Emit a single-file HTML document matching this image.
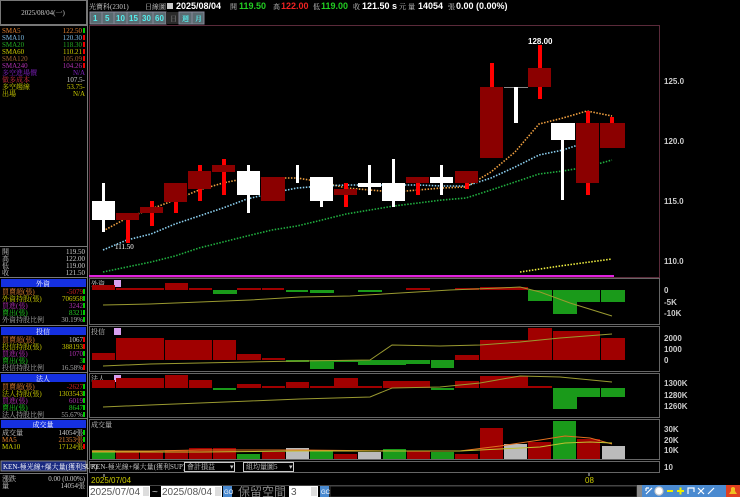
<!DOCTYPE html>
<html><head><meta charset="utf-8"><style>
html,body{margin:0;padding:0;background:#000;width:740px;height:497px;overflow:hidden}
svg{display:block}
text{font-family:"Liberation Sans","Noto Sans CJK TC",sans-serif}
.s{font-family:"Liberation Serif","Noto Serif CJK SC",serif;font-size:7px}
</style></head><body>
<svg width="740" height="497" viewBox="0 0 740 497" xmlns="http://www.w3.org/2000/svg">
<rect width="740" height="497" fill="#000"/>
<!-- left panel frames -->
<rect x="0.5" y="0.5" width="86" height="24" fill="none" stroke="#777"/>
<text x="43" y="15" class="s" fill="#ccc" text-anchor="middle">2025/08/04(一)</text>
<line x1="87.5" y1="0" x2="87.5" y2="497" stroke="#777"/>
<line x1="0" y1="25.5" x2="87" y2="25.5" stroke="#777"/>
<g class="s">
<text x="2" y="33" fill="#e08030" class="s">SMA5</text><text x="82" y="33" fill="#e08030" class="s" text-anchor="end">122.50</text><rect x="83" y="28" width="2" height="5" fill="#0c0"/>
<text x="2" y="40" fill="#7ab8e0" class="s">SMA10</text><text x="82" y="40" fill="#7ab8e0" class="s" text-anchor="end">120.30</text><rect x="83" y="35" width="2" height="5" fill="#e00"/>
<text x="2" y="47" fill="#2a2" class="s">SMA20</text><text x="82" y="47" fill="#2a2" class="s" text-anchor="end">118.30</text><rect x="83" y="42" width="2" height="5" fill="#e00"/>
<text x="2" y="54" fill="#cc0" class="s">SMA60</text><text x="82" y="54" fill="#cc0" class="s" text-anchor="end">110.21</text><rect x="83" y="49" width="2" height="5" fill="#e00"/>
<text x="2" y="61" fill="#a06030" class="s">SMA120</text><text x="82" y="61" fill="#a06030" class="s" text-anchor="end">105.09</text><rect x="83" y="56" width="2" height="5" fill="#e00"/>
<text x="2" y="68" fill="#b030b0" class="s">SMA240</text><text x="82" y="68" fill="#b030b0" class="s" text-anchor="end">104.26</text><rect x="83" y="63" width="2" height="5" fill="#e00"/>
<text x="2" y="75" fill="#8020c0" class="s">多空進場價</text><text x="85" y="75" fill="#8020c0" class="s" text-anchor="end">N/A</text>
<text x="2" y="82" fill="#d03040" class="s">做多成本</text><text x="85" y="82" fill="#ccc" class="s" text-anchor="end">107.5-</text>
<text x="2" y="89" fill="#cc0" class="s">多空趨線</text><text x="85" y="89" fill="#cc0" class="s" text-anchor="end">53.75-</text>
<text x="2" y="96" fill="#cc0" class="s">出場</text><text x="85" y="96" fill="#cc0" class="s" text-anchor="end">N/A</text>
</g>
<line x1="0" y1="246.5" x2="87" y2="246.5" stroke="#777"/>
<g>
<text x="2" y="254" fill="#ccc" class="s">開</text><text x="85" y="254" fill="#ccc" class="s" text-anchor="end">119.50</text>
<text x="2" y="261" fill="#ccc" class="s">高</text><text x="85" y="261" fill="#ccc" class="s" text-anchor="end">122.00</text>
<text x="2" y="268" fill="#ccc" class="s">低</text><text x="85" y="268" fill="#ccc" class="s" text-anchor="end">119.00</text>
<text x="2" y="275" fill="#ccc" class="s">收</text><text x="85" y="275" fill="#ccc" class="s" text-anchor="end">121.50</text>
</g>
<!-- left section headers -->
<g>
<line x1="0" y1="277.5" x2="87" y2="277.5" stroke="#777"/>
<rect x="1" y="279" width="85" height="8" fill="#1530e0"/><text x="43" y="286" fill="#fff" class="s" text-anchor="middle">外資</text>
<text x="2" y="294" fill="#e08030" class="s">買賣超(張)</text><text x="83" y="294" fill="#d02020" class="s" text-anchor="end">-5079</text><rect x="83" y="289" width="2" height="5" fill="#0c0"/>
<text x="2" y="301" fill="#cc0" class="s">外資持股(張)</text><text x="83" y="301" fill="#cc0" class="s" text-anchor="end">706958</text><rect x="83" y="296" width="2" height="5" fill="#0c0"/>
<text x="2" y="308" fill="#b030b0" class="s">買進(張)</text><text x="83" y="308" fill="#b030b0" class="s" text-anchor="end">3242</text><rect x="83" y="303" width="2" height="5" fill="#0c0"/>
<text x="2" y="315" fill="#2c2" class="s">賣出(張)</text><text x="83" y="315" fill="#2c2" class="s" text-anchor="end">8321</text><rect x="83" y="310" width="2" height="5" fill="#0c0"/>
<text x="2" y="322" fill="#aaa" class="s">外資持股比例</text><text x="83" y="322" fill="#aaa" class="s" text-anchor="end">30.19%</text><rect x="83" y="317" width="2" height="5" fill="#0c0"/>
<line x1="0" y1="325.5" x2="87" y2="325.5" stroke="#777"/>
<rect x="1" y="327" width="85" height="8" fill="#1530e0"/><text x="43" y="334" fill="#fff" class="s" text-anchor="middle">投信</text>
<text x="2" y="342" fill="#e08030" class="s">買賣超(張)</text><text x="83" y="342" fill="#ccc" class="s" text-anchor="end">1067</text><rect x="83" y="337" width="2" height="5" fill="#e00"/>
<text x="2" y="349" fill="#cc0" class="s">投信持股(張)</text><text x="83" y="349" fill="#cc0" class="s" text-anchor="end">388193</text><rect x="83" y="344" width="2" height="5" fill="#e00"/>
<text x="2" y="356" fill="#b030b0" class="s">買進(張)</text><text x="83" y="356" fill="#b030b0" class="s" text-anchor="end">1070</text><rect x="83" y="351" width="2" height="5" fill="#0c0"/>
<text x="2" y="363" fill="#2c2" class="s">賣出(張)</text><text x="83" y="363" fill="#2c2" class="s" text-anchor="end">3</text><rect x="83" y="358" width="2" height="5" fill="#0c0"/>
<text x="2" y="370" fill="#aaa" class="s">投信持股比例</text><text x="83" y="370" fill="#aaa" class="s" text-anchor="end">16.58%</text><rect x="83" y="365" width="2" height="5" fill="#e00"/>
<line x1="0" y1="372.5" x2="87" y2="372.5" stroke="#777"/>
<rect x="1" y="374" width="85" height="8" fill="#1530e0"/><text x="43" y="381" fill="#fff" class="s" text-anchor="middle">法人</text>
<text x="2" y="389" fill="#e08030" class="s">買賣超(張)</text><text x="83" y="389" fill="#d02020" class="s" text-anchor="end">-2627</text><rect x="83" y="384" width="2" height="5" fill="#0c0"/>
<text x="2" y="396" fill="#cc0" class="s">法人持股(張)</text><text x="83" y="396" fill="#cc0" class="s" text-anchor="end">1303543</text><rect x="83" y="391" width="2" height="5" fill="#0c0"/>
<text x="2" y="403" fill="#b030b0" class="s">買進(張)</text><text x="83" y="403" fill="#b030b0" class="s" text-anchor="end">6019</text><rect x="83" y="398" width="2" height="5" fill="#0c0"/>
<text x="2" y="410" fill="#2c2" class="s">賣出(張)</text><text x="83" y="410" fill="#2c2" class="s" text-anchor="end">8647</text><rect x="83" y="405" width="2" height="5" fill="#0c0"/>
<text x="2" y="417" fill="#aaa" class="s">法人持股比例</text><text x="83" y="417" fill="#aaa" class="s" text-anchor="end">55.67%</text><rect x="83" y="412" width="2" height="5" fill="#0c0"/>
<line x1="0" y1="418.5" x2="87" y2="418.5" stroke="#777"/>
<rect x="1" y="420" width="85" height="8" fill="#1530e0"/><text x="43" y="427" fill="#fff" class="s" text-anchor="middle">成交量</text>
<text x="2" y="435" fill="#ccc" class="s">成交量</text><text x="83" y="435" fill="#ccc" class="s" text-anchor="end">14054張</text><rect x="83" y="430" width="2" height="5" fill="#0c0"/>
<text x="2" y="442" fill="#e08030" class="s">MA5</text><text x="83" y="442" fill="#e08030" class="s" text-anchor="end">21353張</text><rect x="83" y="437" width="2" height="5" fill="#0c0"/>
<text x="2" y="449" fill="#cc0" class="s">MA10</text><text x="83" y="449" fill="#cc0" class="s" text-anchor="end">17124張</text><rect x="83" y="444" width="2" height="5" fill="#e00"/>
<rect x="1" y="461" width="85" height="10" fill="#1a2a80" stroke="#888"/><text x="3" y="469" fill="#fff" class="s">KEN-極光線+爆大量(獲利SUP)</text>
<line x1="0" y1="473.5" x2="87" y2="473.5" stroke="#777"/>
<text x="2" y="481" fill="#ccc" class="s">漲跌</text><text x="85" y="481" fill="#ccc" class="s" text-anchor="end">0.00 (0.00%)</text>
<text x="2" y="488" fill="#ccc" class="s">量</text><text x="85" y="488" fill="#ccc" class="s" text-anchor="end">14054張</text>
</g>
<!-- top header -->
<text x="89" y="9" fill="#ccc" class="s">光寶科(2301)</text>
<text x="145" y="9" fill="#ccc" class="s">日線圖</text>
<rect x="167" y="3" width="6" height="6" fill="#ccc"/>
<text x="176" y="9" fill="#fff" font-size="9" font-weight="bold">2025/08/04</text>
<text x="230" y="9" fill="#ccc" class="s">開</text><text x="239" y="9" fill="#2c2" font-size="9" font-weight="bold">119.50</text>
<text x="273" y="9" fill="#ccc" class="s">高</text><text x="281" y="9" fill="#e22" font-size="9" font-weight="bold">122.00</text>
<text x="313" y="9" fill="#ccc" class="s">低</text><text x="321" y="9" fill="#2c2" font-size="9" font-weight="bold">119.00</text>
<text x="353" y="9" fill="#ccc" class="s">收</text><text x="362" y="9" fill="#fff" font-size="9" font-weight="bold">121.50 s</text>
<text x="399" y="9" fill="#ccc" class="s">元</text><text x="408" y="9" fill="#ccc" class="s">量</text>
<text x="418" y="9" fill="#fff" font-size="9" font-weight="bold">14054</text><text x="448" y="9" fill="#ccc" class="s">張</text>
<text x="456" y="9" fill="#fff" font-size="9" font-weight="bold">0.00 (0.00%)</text>
<g font-size="8" font-weight="bold" fill="#5ee">
<rect x="90" y="12" width="114" height="12" fill="#556"/>
<rect x="90" y="12" width="12" height="12" fill="#5a6a70" stroke="#889"/><text x="93" y="21">1</text>
<rect x="102" y="12" width="12" height="12" fill="#5a6a70" stroke="#889"/><text x="105" y="21">5</text>
<rect x="114" y="12" width="13" height="12" fill="#5a6a70" stroke="#889"/><text x="116" y="21">10</text>
<rect x="127" y="12" width="13" height="12" fill="#5a6a70" stroke="#889"/><text x="129" y="21">15</text>
<rect x="140" y="12" width="13" height="12" fill="#5a6a70" stroke="#889"/><text x="142" y="21">30</text>
<rect x="153" y="12" width="13" height="12" fill="#5a6a70" stroke="#889"/><text x="155" y="21">60</text>
<rect x="166" y="12" width="13" height="12" fill="#2a2a2a"/><text x="170" y="21" fill="#666" class="s">日</text>
<rect x="179" y="12" width="13" height="12" fill="#5a6a70" stroke="#889"/><text x="182" y="21" class="s" fill="#5ee">週</text>
<rect x="192" y="12" width="12" height="12" fill="#5a6a70" stroke="#889"/><text x="195" y="21" class="s" fill="#5ee">月</text>
</g>
<!-- main chart frame -->
<rect x="89.5" y="25.5" width="570" height="252" fill="none" stroke="#5a2a3a"/>
<g font-size="8" fill="#ccc" font-weight="bold">
<text x="664" y="84">125.0</text><text x="664" y="144">120.0</text><text x="664" y="204">115.0</text><text x="664" y="264">110.0</text>
</g>
<!-- magenta line -->
<line x1="89" y1="276" x2="614" y2="276" stroke="#e020e0" stroke-width="2"/>
<!-- MA lines -->
<g fill="none" stroke-width="1.6" stroke-dasharray="1.5 1.5">
<polyline stroke="#f0a040" points="103,231 127,218 151,209 175,200 199,190 223,183 247,178 272,178 297,178 322,182 346,188 370,190 394,192 418,190 442,188 466,187 491,172 515,152 539,124 563,118 587,111 612,116"/>
<polyline stroke="#8cd0f0" points="103,250 127,240 151,234 175,224 199,216 223,208 247,199 272,193 297,188 322,186 346,185 370,185 394,185 418,185 442,186 466,186 491,178 515,167 539,155 563,150 587,142 612,137"/>
<polyline stroke="#20b040" points="103,272 127,267 151,262 175,256 199,248 223,242 247,236 272,230 297,226 322,220 346,214 370,210 394,206 418,203 442,200 466,198 491,190 515,182 539,174 563,171 587,167 612,160"/>
<polyline stroke="#f0f040" points="520,272 560,266 612,259"/>
</g>
<!-- candles -->
<g>
<rect x="102" y="183" width="3" height="49" fill="#fff"/><rect x="92" y="201" width="23" height="19" fill="#fff"/>
<rect x="126" y="213" width="4" height="30" fill="#f00"/><rect x="116" y="213" width="23" height="7" fill="#8b0000"/>
<rect x="150" y="201" width="4" height="25" fill="#f00"/><rect x="140" y="207" width="23" height="6" fill="#8b0000"/>
<rect x="174" y="183" width="4" height="30" fill="#f00"/><rect x="164" y="183" width="23" height="19" fill="#8b0000"/>
<rect x="198" y="165" width="4" height="36" fill="#f00"/><rect x="188" y="171" width="23" height="18" fill="#8b0000"/>
<rect x="222" y="159" width="4" height="36" fill="#f00"/><rect x="212" y="165" width="23" height="7" fill="#8b0000"/>
<rect x="247" y="165" width="3" height="48" fill="#fff"/><rect x="237" y="171" width="23" height="24" fill="#fff"/>
<rect x="261" y="177" width="24" height="24" fill="#8b0000"/>
<rect x="296" y="165" width="3" height="18" fill="#fff"/>
<rect x="320" y="177" width="3" height="30" fill="#fff"/><rect x="310" y="177" width="23" height="24" fill="#fff"/>
<rect x="344" y="183" width="4" height="24" fill="#f00"/><rect x="334" y="189" width="23" height="6" fill="#8b0000"/>
<rect x="368" y="165" width="3" height="30" fill="#fff"/><rect x="358" y="183" width="23" height="4" fill="#fff"/>
<rect x="392" y="159" width="3" height="48" fill="#fff"/><rect x="382" y="183" width="23" height="18" fill="#fff"/>
<rect x="416" y="177" width="4" height="18" fill="#f00"/><rect x="406" y="177" width="23" height="6" fill="#8b0000"/>
<rect x="440" y="165" width="3" height="30" fill="#fff"/><rect x="430" y="177" width="23" height="6" fill="#fff"/>
<rect x="465" y="171" width="4" height="18" fill="#f00"/><rect x="455" y="171" width="23" height="12" fill="#8b0000"/>
<rect x="490" y="63" width="4" height="24" fill="#f00"/><rect x="480" y="87" width="23" height="71" fill="#8b0000"/>
<rect x="504" y="87" width="24" height="1" fill="#888"/><rect x="514" y="87" width="4" height="36" fill="#fff"/>
<rect x="538" y="45" width="4" height="54" fill="#f00"/><rect x="528" y="68" width="23" height="19" fill="#8b0000"/>
<rect x="561" y="123" width="3" height="77" fill="#fff"/><rect x="551" y="123" width="24" height="17" fill="#fff"/>
<rect x="586" y="111" width="4" height="84" fill="#f00"/><rect x="576" y="123" width="23" height="60" fill="#8b0000"/>
<rect x="610" y="117" width="4" height="10" fill="#f00"/><rect x="600" y="123" width="25" height="25" fill="#8b0000"/>
</g>
<text x="528" y="44" fill="#fff" font-size="8" font-weight="bold">128.00</text>
<text x="115" y="249" fill="#fff" class="s" font-size="8">111.50</text>
<!-- indicator panels frames -->
<g fill="none" stroke="#666">
<rect x="89.5" y="278.5" width="570" height="46"/>
<rect x="89.5" y="326.5" width="570" height="45"/>
<rect x="89.5" y="373.5" width="570" height="44"/>
<rect x="89.5" y="419.5" width="570" height="40"/>
<rect x="89.5" y="461.5" width="570" height="11"/>
</g>
<g class="s">
<text x="91" y="286" fill="#ccc" class="s">外資</text><rect x="114" y="280" width="7" height="7" fill="#d8a0f0"/>
<text x="91" y="334" fill="#ccc" class="s">投信</text><rect x="114" y="328" width="7" height="7" fill="#d8a0f0"/>
<text x="91" y="381" fill="#ccc" class="s">法人</text><rect x="114" y="375" width="7" height="7" fill="#d8a0f0"/>
<text x="91" y="427" fill="#ccc" class="s">成交量</text>
</g>
<!-- foreign bars -->
<g>
<rect x="92" y="285" width="23" height="5" fill="#a00000"/><rect x="116" y="288" width="48" height="2" fill="#a00000"/>
<rect x="165" y="283" width="23" height="7" fill="#a00000"/><rect x="189" y="288" width="23" height="2" fill="#a00000"/>
<rect x="213" y="290" width="24" height="4" fill="#1a9a1a"/><rect x="237" y="288" width="24" height="2" fill="#a00000"/>
<rect x="262" y="288" width="22" height="2" fill="#a00000"/><rect x="286" y="290" width="22" height="2" fill="#1a9a1a"/>
<rect x="310" y="290" width="24" height="3" fill="#1a9a1a"/><rect x="358" y="290" width="24" height="2" fill="#1a9a1a"/>
<rect x="406" y="288" width="24" height="2" fill="#a00000"/><rect x="455" y="288" width="24" height="2" fill="#a00000"/>
<rect x="480" y="287" width="48" height="3" fill="#a00000"/>
<rect x="528" y="290" width="24" height="11" fill="#1a9a1a"/><rect x="553" y="290" width="24" height="24" fill="#1a9a1a"/>
<rect x="577" y="290" width="23" height="12" fill="#1a9a1a"/><rect x="601" y="290" width="24" height="12" fill="#1a9a1a"/>
<polyline fill="none" stroke="#9a9a30" points="103,305 150,304 200,302 250,300 300,297 350,296 400,293 450,290 500,288 520,287 540,292 570,303 612,316"/>
</g>
<g font-size="8" fill="#ccc" font-weight="bold"><text x="664" y="293">0</text><text x="664" y="305">-5K</text><text x="664" y="316">-10K</text></g>
<!-- trust bars -->
<g>
<rect x="92" y="353" width="23" height="7" fill="#a00000"/><rect x="116" y="338" width="48" height="22" fill="#a00000"/>
<rect x="165" y="340" width="47" height="20" fill="#a00000"/><rect x="213" y="340" width="23" height="20" fill="#a00000"/>
<rect x="237" y="354" width="24" height="6" fill="#a00000"/><rect x="262" y="358" width="23" height="2" fill="#a00000"/>
<rect x="286" y="360" width="23" height="2" fill="#1a9a1a"/><rect x="310" y="360" width="24" height="9" fill="#1a9a1a"/>
<rect x="334" y="360" width="24" height="2" fill="#1a9a1a"/><rect x="358" y="360" width="24" height="5" fill="#1a9a1a"/>
<rect x="382" y="360" width="24" height="5" fill="#1a9a1a"/><rect x="406" y="360" width="24" height="4" fill="#1a9a1a"/>
<rect x="431" y="360" width="23" height="8" fill="#1a9a1a"/><rect x="455" y="355" width="24" height="5" fill="#a00000"/>
<rect x="480" y="340" width="48" height="20" fill="#a00000"/><rect x="528" y="328" width="24" height="32" fill="#a00000"/>
<rect x="553" y="331" width="47" height="29" fill="#a00000"/><rect x="601" y="338" width="24" height="22" fill="#a00000"/>
<polyline fill="none" stroke="#9a9a30" points="103,366 150,364 200,363 250,362 300,361 370,360 392,345 440,346 480,345 520,342 560,338 612,334"/>
</g>
<g font-size="8" fill="#ccc" font-weight="bold"><text x="664" y="341">2000</text><text x="664" y="352">1000</text><text x="664" y="363">0</text></g>
<!-- institutional bars -->
<g>
<rect x="92" y="380" width="23" height="8" fill="#a00000"/><rect x="116" y="378" width="48" height="10" fill="#a00000"/>
<rect x="165" y="375" width="23" height="13" fill="#a00000"/><rect x="189" y="380" width="23" height="8" fill="#a00000"/>
<rect x="213" y="388" width="23" height="2" fill="#1a9a1a"/><rect x="237" y="384" width="24" height="4" fill="#a00000"/>
<rect x="262" y="386" width="23" height="2" fill="#a00000"/><rect x="286" y="382" width="23" height="6" fill="#a00000"/>
<rect x="310" y="386" width="24" height="2" fill="#a00000"/><rect x="334" y="378" width="24" height="10" fill="#a00000"/>
<rect x="358" y="386" width="24" height="2" fill="#a00000"/><rect x="383" y="381" width="47" height="7" fill="#a00000"/>
<rect x="431" y="388" width="23" height="2" fill="#1a9a1a"/><rect x="455" y="381" width="24" height="7" fill="#a00000"/>
<rect x="480" y="376" width="48" height="12" fill="#a00000"/><rect x="528" y="386" width="24" height="2" fill="#a00000"/>
<rect x="553" y="388" width="24" height="21" fill="#1a9a1a"/><rect x="577" y="388" width="23" height="9" fill="#1a9a1a"/>
<rect x="601" y="388" width="24" height="9" fill="#1a9a1a"/>
<polyline fill="none" stroke="#9a9a30" points="103,407 150,405 200,403 250,401 300,399 370,397 392,388 440,387 480,383 520,376 560,377 612,382"/>
</g>
<g font-size="8" fill="#ccc" font-weight="bold"><text x="664" y="386">1300K</text><text x="664" y="398">1280K</text><text x="664" y="409">1260K</text></g>
<!-- volume bars -->
<g stroke-width="0.6">
<rect x="92" y="450" width="23" height="9" fill="#1a9a1a"/><rect x="116" y="452" width="23" height="7" fill="#a00000"/>
<rect x="140" y="452" width="23" height="7" fill="#a00000"/><rect x="165" y="450" width="23" height="9" fill="#a00000"/>
<rect x="189" y="448" width="23" height="11" fill="#a00000"/><rect x="213" y="448" width="23" height="11" fill="#a00000"/>
<rect x="237" y="454" width="23" height="5" fill="#1a9a1a"/><rect x="262" y="452" width="23" height="7" fill="#a00000"/>
<rect x="286" y="448" width="23" height="11" fill="#bbb"/><rect x="310" y="450" width="23" height="9" fill="#1a9a1a"/>
<rect x="334" y="454" width="23" height="5" fill="#a00000"/><rect x="358" y="452" width="23" height="7" fill="#bbb"/>
<rect x="383" y="449" width="23" height="10" fill="#1a9a1a"/><rect x="407" y="451" width="23" height="8" fill="#a00000"/>
<rect x="431" y="452" width="23" height="7" fill="#1a9a1a"/><rect x="455" y="454" width="23" height="5" fill="#a00000"/>
<rect x="480" y="428" width="23" height="31" fill="#a00000"/><rect x="504" y="444" width="23" height="15" fill="#bbb"/>
<rect x="528" y="442" width="23" height="17" fill="#a00000"/><rect x="553" y="421" width="23" height="38" fill="#1a9a1a"/>
<rect x="577" y="439" width="23" height="20" fill="#a00000"/><rect x="602" y="446" width="23" height="13" fill="#bbb"/>
<polyline fill="none" stroke="#e07020" stroke-width="1" points="92,451 150,451 200,450 300,450 400,451 460,451 500,446 540,440 565,436 590,438 612,444"/>
<polyline fill="none" stroke="#c0c030" stroke-width="1" points="92,452 200,452 300,451 400,451 460,451 500,449 540,447 565,443 590,442 612,443"/>
</g>
<g font-size="8" fill="#ccc" font-weight="bold"><text x="664" y="432">30K</text><text x="664" y="443">20K</text><text x="664" y="453">10K</text><text x="664" y="470">10</text></g>
<!-- bottom toolbar row -->
<text x="91" y="469" fill="#ccc" class="s">KEN-極光線+爆大量(獲利SUP)</text>
<rect x="184.5" y="462.5" width="50" height="9" fill="#000" stroke="#ccc"/><text x="187" y="469" fill="#ccc" class="s">會計損益</text><text x="230" y="469" fill="#ccc" class="s">▾</text>
<rect x="243.5" y="462.5" width="50" height="9" fill="#000" stroke="#ccc"/><text x="246" y="469" fill="#ccc" class="s">組均量圖5</text><text x="289" y="469" fill="#ccc" class="s">▾</text>
<line x1="104" y1="474" x2="104" y2="477" stroke="#ccc"/>
<text x="91" y="483" fill="#cc0" font-size="8">2025/07/04</text>
<line x1="589" y1="473" x2="589" y2="476" stroke="#ccc"/>
<text x="585" y="483" fill="#cc0" font-size="8">08</text>
<line x1="89" y1="485.5" x2="740" y2="485.5" stroke="#444"/>
<rect x="89" y="486" width="61" height="11" fill="#fff"/><text x="90" y="495" fill="#555" font-size="10">2025/07/04</text><rect x="143" y="487" width="6" height="9" fill="#ddd"/>
<text x="152" y="495" fill="#ccc" font-size="10">~</text>
<rect x="161" y="486" width="61" height="11" fill="#fff"/><text x="162" y="495" fill="#555" font-size="10">2025/08/04</text><rect x="215" y="487" width="6" height="9" fill="#ddd"/>
<rect x="223" y="486" width="9" height="11" fill="#4a8ad0"/><text x="224" y="494" fill="#fff" font-size="6">GO</text>
<text x="238" y="496" fill="#888" font-size="12" font-family="'Noto Serif CJK SC',serif">保留空間</text>
<rect x="289" y="486" width="29" height="11" fill="#fff"/><text x="291" y="495" fill="#555" font-size="10">3</text><rect x="311" y="487" width="6" height="9" fill="#ddd"/>
<rect x="320" y="486" width="9" height="11" fill="#4a8ad0"/><text x="321" y="494" fill="#fff" font-size="6">GO</text>
<rect x="330" y="486" width="307" height="11" fill="#000" stroke="#444"/>
<rect x="637" y="485" width="103" height="12" fill="#4a8ad0"/>
<rect x="637" y="485" width="5" height="12" fill="#888"/>
<g stroke="#fff" stroke-width="1.2" fill="none">
<path d="M646 494 L652 488 M646 488 L646 491 M646 488 L649 488"/>
<circle cx="659" cy="491" r="4" fill="#fff" stroke="#ccc"/>
<line x1="667" y1="491" x2="673" y2="491" stroke="#ee0" stroke-width="2"/>
<path d="M677 491 L684 491 M680.5 487.5 L680.5 494.5" stroke="#ee0" stroke-width="2"/>
<path d="M688 494 L688 488 L694 488 L694 492"/>
<path d="M698 488 L704 494 M704 488 L698 494"/>
<path d="M708 494 L714 488"/>
</g>
<rect x="726" y="485" width="14" height="12" fill="#e04020"/>
<path d="M729 494 L737 494 L735 491 L735 488 Q733 486 731 488 L731 491 Z" fill="#f0c020"/>
</svg>
</body></html>
